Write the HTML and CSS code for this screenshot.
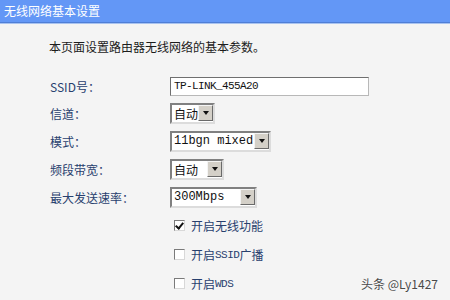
FILE: index.html
```html
<!DOCTYPE html>
<html lang="zh-CN">
<head>
    <meta charset="UTF-8">
    <title>无线网络基本设置</title>
    <link rel="stylesheet" href="styles.css">
</head>
<body>
    <div class="title-bar">无线网络基本设置</div>
    <div class="panel">
        <p class="intro">本页面设置路由器无线网络的基本参数。</p>

        <div class="form">
            <div class="row ssid-row">
                <span class="label">SSID号：</span>
                <span class="textbox">TP-LINK_455A20</span>
            </div>
            <div class="row">
                <span class="label">信道：</span>
                <span class="dropdown w-channel"><span class="value cjk">自动</span><span class="arrow"></span></span>
            </div>
            <div class="row">
                <span class="label">模式：</span>
                <span class="dropdown w-mode"><span class="value">11bgn mixed</span><span class="arrow"></span></span>
            </div>
            <div class="row">
                <span class="label">频段带宽：</span>
                <span class="dropdown w-band"><span class="value cjk">自动</span><span class="arrow"></span></span>
            </div>
            <div class="row">
                <span class="label">最大发送速率：</span>
                <span class="dropdown w-rate"><span class="value">300Mbps</span><span class="arrow"></span></span>
            </div>
            <div class="row check-row">
                <span class="label"></span>
                <span class="check"><span class="box checked"></span>开启无线功能</span>
            </div>
            <div class="row check-row">
                <span class="label"></span>
                <span class="check"><span class="box"></span>开启<span class="mono-s">SSID</span>广播</span>
            </div>
            <div class="row check-row">
                <span class="label"></span>
                <span class="check"><span class="box"></span>开启<span class="mono-s">WDS</span></span>
            </div>
        </div>
    </div>
    <div class="watermark">头条 @Ly1427</div>
</body>
</html>
```

FILE: styles.css
```css
body {
    margin: 0;
    width: 450px;
    height: 300px;
    overflow: hidden;
    background-color: #f4f4f4;
    font-family: "Noto Sans CJK SC", "DejaVu Sans", sans-serif;
    font-size: 12px;
    position: relative;
}
.title-bar {
    height: 22px;
    line-height: 22px;
    padding-left: 4px;
    background-color: #6397f6;
    border-bottom: 1px solid #4f7ed6;
    box-shadow: 0 1px 0 #a9c3f0;
    color: #fff;
    font-size: 12px;
}
.panel {
    padding-left: 49px;
}
.intro {
    margin: 15px 0 0 0;
    line-height: 18px;
    color: #1c1c1c;
}
.form {
    margin-top: 17px;
}
.row {
    display: flex;
    align-items: center;
    height: 28px;
}
.ssid-row {
    height: 26px;
}
.check-row {
    height: 29px;
}
.label {
    width: 120px;
    flex: none;
    color: #28406e;
    padding-left: 1px;
}
.textbox {
    width: 194px;
    height: 17px;
    line-height: 17px;
    padding-left: 3px;
    background: #fff;
    border: 1px solid #6f6f6f;
    border-right-color: #b8b8b8;
    border-bottom-color: #b8b8b8;
    font-family: "Liberation Mono", monospace;
    font-size: 11px;
    letter-spacing: -0.6px;
    color: #111;
}
.dropdown {
    display: flex;
    align-items: center;
    height: 17px;
    background: #fff;
    border: 2px solid #808080;
    border-right-color: #dcdcdc;
    border-bottom-color: #dcdcdc;
    box-sizing: content-box;
}
.w-channel { width: 41px; }
.w-mode { width: 97px; }
.w-band { width: 50px; }
.w-rate { width: 83px; }
.value {
    flex: 1;
    padding-left: 2px;
    font-family: "Liberation Mono", monospace;
    font-size: 12px;
    color: #111;
    white-space: nowrap;
    overflow: hidden;
}
.value.cjk {
    font-family: "Noto Sans CJK SC", sans-serif;
}
.arrow {
    width: 15px;
    height: 16px;
    margin-right: 0;
    flex: none;
    background: #d4d0c8;
    border: 1px solid #f4f4f4;
    border-right-color: #6a6a6a;
    border-bottom-color: #6a6a6a;
    box-sizing: border-box;
    display: flex;
    align-items: center;
    justify-content: center;
}
.arrow::after {
    content: "";
    border-left: 3px solid transparent;
    border-right: 3px solid transparent;
    border-top: 4px solid #111;
}
.check {
    display: flex;
    align-items: center;
    color: #28406e;
    padding-left: 4px;
}
.box {
    width: 9px;
    height: 9px;
    margin-right: 6px;
    background: #fff;
    border: 1px solid #7a7a7a;
    border-right-color: #d8d8d8;
    border-bottom-color: #d8d8d8;
    position: relative;
}
.box.checked::after {
    content: "";
    position: absolute;
    left: 2px;
    top: 0px;
    width: 3px;
    height: 6px;
    border-right: 2px solid #111;
    border-bottom: 2px solid #111;
    transform: rotate(40deg);
}
.mono-s {
    font-family: "Liberation Mono", monospace;
    font-size: 11px;
    letter-spacing: -0.5px;
}
.watermark {
    position: absolute;
    left: 361px;
    top: 275px;
    color: #4a4a4a;
    font-size: 12px;
    text-shadow: 0 0 2px #fff;
}
```
